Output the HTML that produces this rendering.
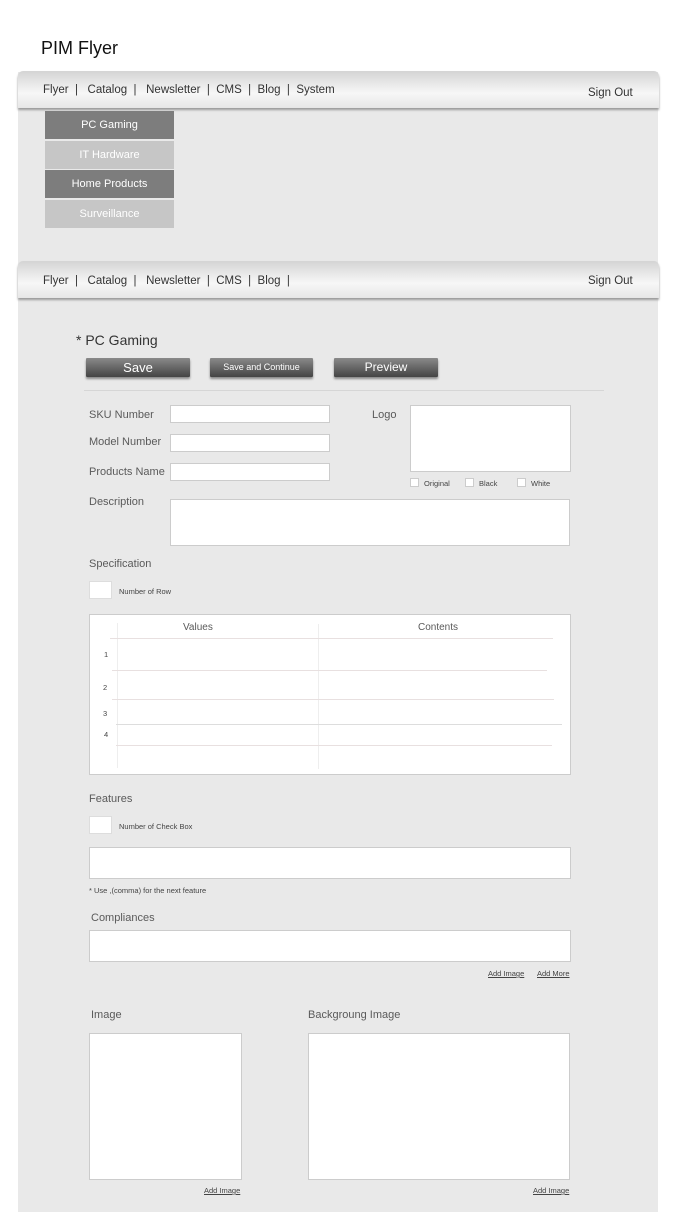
<!DOCTYPE html>
<html><head><style>
*{margin:0;padding:0;box-sizing:border-box}
body{width:680px;height:1212px;background:#fff;font-family:"Liberation Sans",sans-serif;position:relative;overflow:hidden;color:#444}
.a{position:absolute}
.panel{left:18px;top:72px;width:640px;height:1140px;background:#e9e9e9}
.nav{left:18px;width:641px;height:37px;background:linear-gradient(#d4d4d4,#f7f7f7 60%,#e6e6e6);border-radius:5px 5px 0 0;box-shadow:0 2px 2px #999;font-size:11.5px;color:#333}
.nav span{position:absolute;top:13px}
.dd{left:45px;width:129px;height:28px;color:#fff;font-size:11px;text-align:center;line-height:28px}
.btn{height:19px;background:linear-gradient(#8a8a8a,#444);color:#fff;text-align:center;line-height:19px;box-shadow:0 2px 2px #888;border-radius:1px}
.in{background:#fff;border:1px solid #ccc}
.lb{font-size:11px;color:#5a5a5a}
.cb{width:9px;height:9px;background:#fff;border:1px solid #ccc}
.sm{font-size:7.5px;color:#444}
.ln{background:#e8e0e0;height:1px}
</style></head><body>
<div class="a" style="left:41px;top:38px;font-size:18px;color:#111">PIM Flyer</div>
<div class="a panel"></div>
<div class="a nav" style="top:71px"><span style="left:25px">Flyer &nbsp;|&nbsp;&nbsp; Catalog &nbsp;|&nbsp;&nbsp; Newsletter &nbsp;|&nbsp; CMS &nbsp;|&nbsp; Blog &nbsp;|&nbsp; System</span><span style="left:570px;top:16px">Sign Out</span></div>
<div class="a dd" style="top:111px;background:#7d7d7d">PC Gaming</div>
<div class="a dd" style="top:141px;background:#c6c6c6">IT Hardware</div>
<div class="a dd" style="top:170px;background:#7d7d7d">Home Products</div>
<div class="a dd" style="top:200px;background:#c6c6c6">Surveillance</div>
<div class="a nav" style="top:261px"><span style="left:25px;top:14px">Flyer &nbsp;|&nbsp;&nbsp; Catalog &nbsp;|&nbsp;&nbsp; Newsletter &nbsp;|&nbsp; CMS &nbsp;|&nbsp; Blog &nbsp;|</span><span style="left:570px;top:14px">Sign Out</span></div>
<div class="a" style="left:76px;top:332px;font-size:14px;color:#333">* PC Gaming</div>
<div class="a btn" style="left:86px;top:358px;width:104px;font-size:13px">Save</div>
<div class="a btn" style="left:210px;top:358px;width:103px;font-size:9px">Save and Continue</div>
<div class="a btn" style="left:334px;top:358px;width:104px;font-size:12px">Preview</div>
<div class="a" style="left:84px;top:390px;width:520px;height:1px;background:#d6d6d6"></div>
<div class="a lb" style="left:89px;top:409px">SKU Number</div>
<div class="a in" style="left:170px;top:405px;width:160px;height:18px"></div>
<div class="a lb" style="left:89px;top:436px">Model Number</div>
<div class="a in" style="left:170px;top:434px;width:160px;height:18px"></div>
<div class="a lb" style="left:89px;top:466px">Products Name</div>
<div class="a in" style="left:170px;top:463px;width:160px;height:18px"></div>
<div class="a lb" style="left:372px;top:409px">Logo</div>
<div class="a in" style="left:410px;top:405px;width:161px;height:67px"></div>
<div class="a cb" style="left:410px;top:478px"></div><div class="a sm" style="left:424px;top:479px">Original</div>
<div class="a cb" style="left:465px;top:478px"></div><div class="a sm" style="left:479px;top:479px">Black</div>
<div class="a cb" style="left:517px;top:478px"></div><div class="a sm" style="left:531px;top:479px">White</div>
<div class="a lb" style="left:89px;top:496px">Description</div>
<div class="a in" style="left:170px;top:499px;width:400px;height:47px"></div>
<div class="a lb" style="left:89px;top:558px">Specification</div>
<div class="a in" style="left:89px;top:581px;width:23px;height:18px;border-color:#ddd"></div>
<div class="a sm" style="left:119px;top:587px">Number of Row</div>
<div class="a in" style="left:89px;top:614px;width:482px;height:161px"></div>
<div class="a lb" style="left:183px;top:622px;font-size:10px">Values</div>
<div class="a lb" style="left:418px;top:622px;font-size:10px">Contents</div>
<div class="a" style="left:117px;top:623px;width:1px;height:145px;background:#eee"></div>
<div class="a" style="left:318px;top:624px;width:1px;height:145px;background:#eee"></div>
<div class="a ln" style="left:110px;top:638px;width:443px"></div>
<div class="a ln" style="left:112px;top:670px;width:435px"></div>
<div class="a ln" style="left:112px;top:699px;width:442px"></div>
<div class="a ln" style="left:116px;top:724px;width:446px;background:#ddd"></div>
<div class="a ln" style="left:116px;top:745px;width:436px"></div>
<div class="a sm" style="left:104px;top:650px">1</div>
<div class="a sm" style="left:103px;top:683px">2</div>
<div class="a sm" style="left:103px;top:709px">3</div>
<div class="a sm" style="left:104px;top:730px">4</div>
<div class="a lb" style="left:89px;top:793px">Features</div>
<div class="a in" style="left:89px;top:816px;width:23px;height:18px;border-color:#ddd"></div>
<div class="a sm" style="left:119px;top:822px">Number of Check Box</div>
<div class="a in" style="left:89px;top:847px;width:482px;height:32px"></div>
<div class="a sm" style="left:89px;top:886px">* Use ,(comma) for the next feature</div>
<div class="a lb" style="left:91px;top:912px">Compliances</div>
<div class="a in" style="left:89px;top:930px;width:482px;height:32px"></div>
<div class="a sm" style="left:488px;top:969px;text-decoration:underline">Add Image</div>
<div class="a sm" style="left:537px;top:969px;text-decoration:underline">Add More</div>
<div class="a lb" style="left:91px;top:1009px">Image</div>
<div class="a lb" style="left:308px;top:1009px">Backgroung Image</div>
<div class="a in" style="left:89px;top:1033px;width:153px;height:147px"></div>
<div class="a in" style="left:308px;top:1033px;width:262px;height:147px"></div>
<div class="a sm" style="left:204px;top:1186px;text-decoration:underline">Add Image</div>
<div class="a sm" style="left:533px;top:1186px;text-decoration:underline">Add Image</div>
</body></html>
